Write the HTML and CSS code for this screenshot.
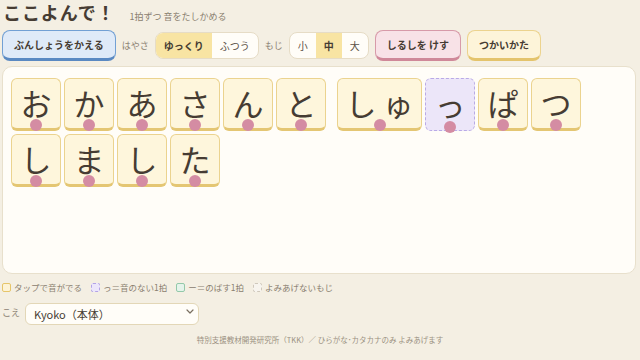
FILE: index.html
```html
<!DOCTYPE html>
<html lang="ja">
<head>
  <meta charset="UTF-8">
  <title>ここよんで！</title>
  <link rel="stylesheet" href="styles.css">
</head>
<body>
  <header class="header">
    <h1 class="title">ここよんで！</h1>
    <span class="subtitle">1拍ずつ 音をたしかめる</span>
  </header>

  <div class="toolbar">
    <button class="btn btn-blue">ぶんしょうをかえる</button>
    <span class="label">はやさ</span>
    <div class="seg">
      <button class="seg-item active">ゆっくり</button>
      <button class="seg-item">ふつう</button>
    </div>
    <span class="label">もじ</span>
    <div class="seg">
      <button class="seg-item">小</button>
      <button class="seg-item active">中</button>
      <button class="seg-item">大</button>
    </div>
    <button class="btn btn-pink">しるしを けす</button>
    <button class="btn btn-yellow">つかいかた</button>
  </div>

  <main class="panel">
    <div class="sentence">
      <div class="word">
        <button class="tile"><span>お</span><i class="dot"></i></button>
        <button class="tile"><span>か</span><i class="dot"></i></button>
        <button class="tile"><span>あ</span><i class="dot"></i></button>
        <button class="tile"><span>さ</span><i class="dot"></i></button>
        <button class="tile"><span>ん</span><i class="dot"></i></button>
        <button class="tile"><span>と</span><i class="dot"></i></button>
      </div>
      <div class="word">
        <button class="tile wide"><span>しゅ</span><i class="dot"></i></button>
        <button class="tile silent"><span>っ</span><i class="dot"></i></button>
        <button class="tile"><span>ぱ</span><i class="dot"></i></button>
        <button class="tile"><span>つ</span><i class="dot"></i></button>
      </div>
      <div class="word">
        <button class="tile"><span>し</span><i class="dot"></i></button>
        <button class="tile"><span>ま</span><i class="dot"></i></button>
        <button class="tile"><span>し</span><i class="dot"></i></button>
        <button class="tile"><span>た</span><i class="dot"></i></button>
      </div>
    </div>
  </main>

  <div class="legend">
    <span class="legend-item"><i class="swatch sw-tap"></i>タップで音がでる</span>
    <span class="legend-item"><i class="swatch sw-silent"></i>っ＝音のない1拍</span>
    <span class="legend-item"><i class="swatch sw-long"></i>ー＝のばす1拍</span>
    <span class="legend-item"><i class="swatch sw-skip"></i>よみあげないもじ</span>
  </div>

  <div class="voice">
    <span class="label">こえ</span>
    <div class="select-wrap">
      <select class="select">
        <option>Kyoko（本体）</option>
      </select>
      <svg class="chevron" width="8" height="5" viewBox="0 0 8 5"><path d="M1 1l3 3 3-3" fill="none" stroke="#7a6f60" stroke-width="1.2" stroke-linecap="round" stroke-linejoin="round"/></svg>
    </div>
  </div>

  <footer class="footer">特別支援教材開発研究所（TKK）／ ひらがな･カタカナのみ よみあげます</footer>
</body>
</html>
```

FILE: styles.css
```css
body {
  margin: 0;
  padding: 0 2px;
  background-color: #f4efe3;
  font-family: "Noto Sans CJK JP", "Noto Sans", sans-serif;
  color: #463c33;
}

button {
  font-family: inherit;
  color: inherit;
  cursor: pointer;
}

.header {
  display: flex;
  align-items: baseline;
  gap: 14px;
  margin-bottom: 5px;
  padding-left: 1px;
}

.title {
  margin: 0;
  font-size: 18px;
  line-height: 24px;
  font-weight: bold;
  letter-spacing: 0.9px;
}

.subtitle {
  font-size: 9px;
  color: #8a8070;
}

.toolbar {
  display: flex;
  align-items: center;
  gap: 6px;
  height: 32px;
}

.label {
  font-size: 9px;
  color: #8c8273;
}

.btn {
  box-sizing: border-box;
  height: 31px;
  padding: 0 11px;
  border-radius: 8px;
  font-size: 10px;
  font-weight: bold;
  border: 1.5px solid;
  border-bottom-width: 3.5px;
}

.btn-blue {
  background-color: #dfeaf8;
  border-color: #72a0d4;
  border-bottom-color: #5a89c2;
}

.btn-pink {
  background-color: #f8e2e7;
  border-color: #d79aa9;
  border-bottom-color: #cf8899;
}

.btn-yellow {
  background-color: #fdf4d9;
  border-color: #ecd38e;
  border-bottom-color: #e4c46c;
}

.seg {
  display: flex;
  height: 27px;
  box-sizing: border-box;
  border: 1.5px solid #e6dcc6;
  border-radius: 8px;
  overflow: hidden;
  background-color: #fffdf8;
}

.seg-item {
  border: none;
  background: none;
  padding: 0 8px;
  font-size: 10px;
  color: #5a5045;
}

.seg-item.active {
  background-color: #f8e4a3;
  font-weight: bold;
  color: #463c33;
}

.panel {
  display: block;
  box-sizing: border-box;
  height: 208px;
  margin: 5px 2px 0 0;
  padding: 11px 8px;
  background-color: #fffdf8;
  border: 1px solid #e8e0cc;
  border-radius: 10px;
}

.sentence {
  display: flex;
  flex-wrap: wrap;
  column-gap: 11px;
  row-gap: 3px;
}

.word {
  display: flex;
  gap: 3px;
}

.tile {
  position: relative;
  box-sizing: border-box;
  width: 50px;
  height: 53px;
  padding: 0 0 2px;
  display: flex;
  align-items: center;
  justify-content: center;
  background-color: #fef6dc;
  border: 1.5px solid #ebd38f;
  border-bottom: 3px solid #e4c673;
  border-radius: 6px;
  font-size: 31px;
  color: #463c33;
}

.tile.wide {
  width: 85px;
  letter-spacing: 6px;
  padding-left: 6px;
}

.tile.silent {
  background-color: #ece6f9;
  border: 1.5px dashed #b9aae6;
}

.dot {
  position: absolute;
  left: 50%;
  bottom: -3px;
  width: 12px;
  height: 12px;
  margin-left: -6px;
  border-radius: 50%;
  background-color: #d48ca3;
}

.legend {
  display: flex;
  align-items: center;
  gap: 9px;
  height: 14px;
  margin-top: 6px;
}

.legend-item {
  display: flex;
  align-items: center;
  gap: 3px;
  font-size: 8.5px;
  color: #8a8070;
}

.swatch {
  box-sizing: border-box;
  width: 9px;
  height: 9px;
  border-radius: 2px;
  border: 1.5px solid;
}

.sw-tap {
  background-color: #fdf3d6;
  border-color: #e6c56a;
}

.sw-silent {
  background-color: #ece6fb;
  border: 1.5px dashed #b3a3e6;
}

.sw-long {
  background-color: #e5f3ea;
  border-color: #93c9a9;
}

.sw-skip {
  background-color: #f7f4ee;
  border: 1.5px dashed #cfc8bb;
}

.voice {
  display: flex;
  align-items: center;
  gap: 5px;
  margin-top: 6px;
}

.voice .label {
  font-size: 9px;
}

.select-wrap {
  position: relative;
}

.select {
  box-sizing: border-box;
  width: 174px;
  height: 22px;
  padding: 0 8px;
  appearance: none;
  background-color: #fffdf8;
  border: 1.5px solid #e3d7b7;
  border-radius: 6px;
  font-family: "Noto Sans CJK JP", sans-serif;
  font-size: 11px;
  color: #463c33;
}

.chevron {
  position: absolute;
  right: 5px;
  top: 9px;
}

.footer {
  margin-top: 9px;
  text-align: center;
  font-size: 7.5px;
  line-height: 12px;
  color: #9b9182;
}
```
